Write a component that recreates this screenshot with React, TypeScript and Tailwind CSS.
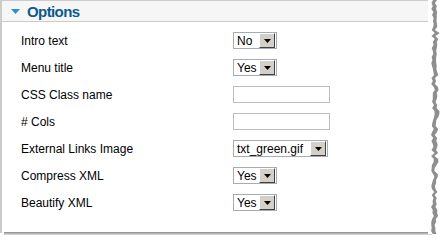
import React from "react";

function rand(seed: number) {
  let s = seed;
  return () => {
    s = (s * 9301 + 49297) % 233280;
    return s / 233280;
  };
}

function TornEdge() {
  const r = rand(7);
  const pts: string[] = [];
  const pts2: string[] = [];
  for (let y = 0; y <= 234; y += 3) {
    const x = 3 + r() * 4;
    pts.push(`${x.toFixed(1)},${y}`);
    pts2.push(`${(x + 3 + r() * 2).toFixed(1)},${y}`);
  }
  const shadow = `M0,0 L${pts2.join(" L")} L0,234 Z`;
  const edge = `M0,0 L${pts.join(" L")} L0,234 Z`;
  return (
    <svg width="14" height="236" className="absolute left-[428px] top-0" viewBox="0 0 14 236">
      <path d={shadow} fill="#7a7a7a" opacity="0.85" />
      <path d={edge} fill="#ffffff" />
    </svg>
  );
}

function Arrow() {
  return (
    <div className="w-[16px] h-[15px] bg-[#d4d0c8] border border-t-white border-l-white border-r-[#404040] border-b-[#404040] flex items-center justify-center">
      <svg width="7" height="4" viewBox="0 0 7 4">
        <path d="M0,0 H7 L3.5,4 Z" fill="#000" />
      </svg>
    </div>
  );
}

function Select({ value, width }: { value: string; width: string }) {
  return (
    <div className={`${width} h-[17px] border border-[#a5acb2] bg-white flex items-center justify-between pl-[3px] pr-px`}>
      <span className="text-[12px] leading-none text-black">{value}</span>
      <Arrow />
    </div>
  );
}

function Input() {
  return <div className="w-[97px] h-[17px] border border-[#bdbdbd] bg-white" />;
}

const rows: { label: string; control: React.ReactNode }[] = [
  { label: "Intro text", control: <Select value="No" width="w-[44px]" /> },
  { label: "Menu title", control: <Select value="Yes" width="w-[44px]" /> },
  { label: "CSS Class name", control: <Input /> },
  { label: "# Cols", control: <Input /> },
  { label: "External Links Image", control: <Select value="txt_green.gif" width="w-[95px]" /> },
  { label: "Compress XML", control: <Select value="Yes" width="w-[44px]" /> },
  { label: "Beautify XML", control: <Select value="Yes" width="w-[44px]" /> },
];

export default function App() {
  return (
    <div
      className="relative w-[442px] h-[246px] bg-white overflow-hidden"
      style={{ fontFamily: '"Liberation Sans", Arial, sans-serif' }}
    >
      <div className="w-[432px] h-[233px] border-l-2 border-t border-[#cccccc] flex flex-col">
        <div className="h-[21px] bg-[#f6f6f6] border-b border-[#cccccc] flex items-center pl-[9px] gap-[7px]">
          <svg width="9" height="5" viewBox="0 0 9 5">
            <path d="M0,0 H9 L4.5,5 Z" fill="#2d8fd0" />
          </svg>
          <span className="text-[15px] font-bold text-[#0e5a8f] leading-none tracking-[-0.6px]">Options</span>
        </div>
        <div className="flex flex-col pt-[10px] gap-[10px]">
          {rows.map((row) => (
            <div key={row.label} className="flex items-center h-[17px]">
              <span className="w-[231px] pl-[19px] text-[12px] text-black leading-none">{row.label}</span>
              {row.control}
            </div>
          ))}
        </div>
      </div>
      <div className="absolute left-[4px] top-[232px] w-[428px] h-[3px] bg-gradient-to-b from-[#8a8a8a] to-[#e0e0e0]" />
      <TornEdge />
    </div>
  );
}
